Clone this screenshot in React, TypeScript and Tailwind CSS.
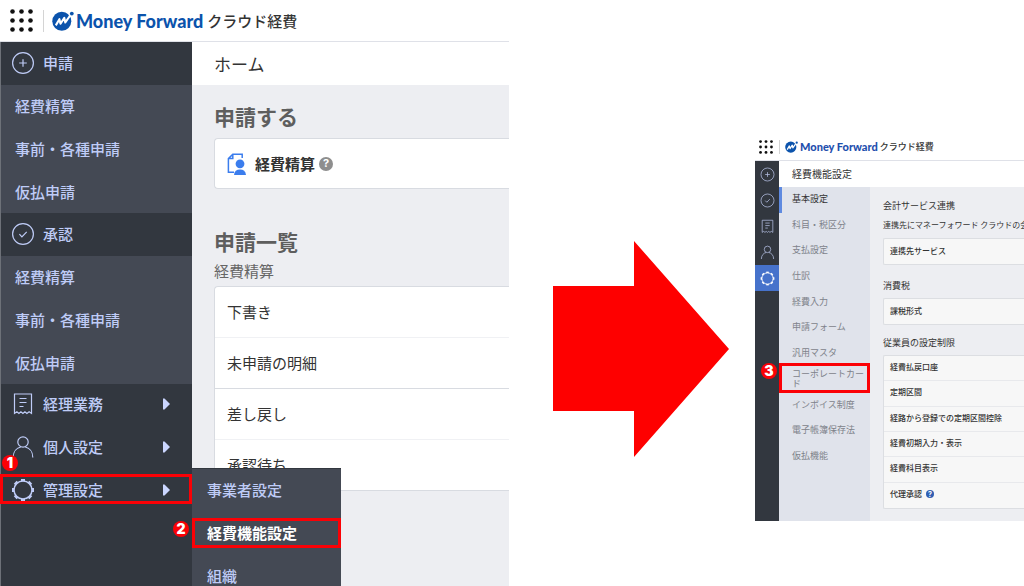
import type { ReactNode } from "react";

const REQUEST_LINKS = ["経費精算", "事前・各種申請", "仮払申請"];
const REQUEST_STATUSES = ["下書き", "未申請の明細", "差し戻し", "承認待ち"];
const SETTING_LINKS = [
  "基本設定",
  "科目・税区分",
  "支払設定",
  "仕訳",
  "経費入力",
  "申請フォーム",
  "汎用マスタ",
  "コーポレートカード",
  "インボイス制度",
  "電子帳簿保存法",
  "仮払機能",
];
const LIMIT_ROWS = [
  "経費払戻口座",
  "定期区間",
  "経路から登録での定期区間控除",
  "経費初期入力・表示",
  "経費科目表示",
  "代理承認",
];

function AppsIcon({ className }: { className: string }) {
  return (
    <svg viewBox="0 0 22 22" className={className} fill="#111">
      {[2.4, 11, 19.6].map((y) =>
        [2.4, 11, 19.6].map((x) => <circle key={`${x}-${y}`} cx={x} cy={y} r="2.2" />),
      )}
    </svg>
  );
}

function LogoMark({ className }: { className: string }) {
  return (
    <svg viewBox="0 0 22 20" className={className}>
      <circle cx="9.8" cy="10.2" r="9.5" fill="#0b53ac" />
      <circle cx="19.8" cy="2.6" r="3.4" fill="#fff" />
      <circle cx="19.8" cy="2.6" r="1.9" fill="#0b53ac" />
      <path
        d="M3.8 14.4 7.4 8.2 8.5 12.8 12.3 6.9 13.3 11.4 17.8 5"
        fill="none"
        stroke="#fff"
        strokeWidth="2.1"
        strokeLinejoin="round"
      />
    </svg>
  );
}

function PlusIcon() {
  return (
    <>
      <circle cx="12" cy="12" r="10.4" />
      <path d="M12 8.2v7.6M8.2 12h7.6" />
    </>
  );
}

function CheckIcon() {
  return (
    <>
      <circle cx="12" cy="12" r="10.4" />
      <path d="m8.4 12.2 2.5 2.6 4.8-5" />
    </>
  );
}

function ReceiptIcon() {
  return (
    <path d="M3.5 21.4V2h17v19.4l-2.4-1.6-2.2 1.6-2-1.6-2 1.6-2-1.6-2 1.6-2-1.6zM8.500 6.500h7M8.500 10.500h7M8.500 14.500h4" />
  );
}

function PersonIcon() {
  return (
    <>
      <circle cx="12" cy="7" r="5.2" />
      <path d="M2.200 22.400c0-6 3.600-9.600 7.600-10.400M21.800 22.400c0-6-3.600-9.600-7.600-10.400" />
    </>
  );
}

function GearIcon() {
  return (
    <>
      <circle cx="12" cy="12" r="9" strokeWidth="1.500" />
      {[0, 45, 90, 135, 180, 225, 270, 315].map((deg) => (
        <path key={deg} d="M10 2.100h4" strokeWidth="2.200" transform={`rotate(${deg} 12 12)`} />
      ))}
    </>
  );
}

function MenuIcon({ className, children }: { className: string; children: ReactNode }) {
  return (
    <svg viewBox="0 0 24 24" className={className} fill="none" stroke="currentColor" strokeWidth="1.200">
      {children}
    </svg>
  );
}

function StepBadge({ className, children }: { className: string; children: ReactNode }) {
  return (
    <span
      className={`absolute z-20 flex size-4 items-center justify-center rounded-full bg-[#fb0106] font-['Inter'] text-[14px] leading-none font-black text-white ${className}`}
    >
      {children}
    </span>
  );
}

function MenuButton({ icon, label }: { icon: ReactNode; label: string }) {
  return (
    <button type="button" className="flex size-full items-center gap-2 pr-5 pb-0.5 pl-[10px] text-left">
      <MenuIcon className="size-6">{icon}</MenuIcon>
      <span className="flex-1">{label}</span>
      <svg viewBox="0 0 7 12" className="mr-0.5 h-3 w-[7px]" fill="#cbd6ff">
        <path d="M0 .5h1.500L7 6l-5.500 5.500H0z" />
      </svg>
    </button>
  );
}

function SubLinks() {
  return (
    <div className="grid h-32 grid-rows-3 bg-[#444954]">
      {REQUEST_LINKS.map((label) => (
        <a key={label} href="#" className="flex items-center pl-[14px]">
          {label}
        </a>
      ))}
    </div>
  );
}

function Sidebar() {
  return (
    <nav className="w-48 shrink-0 border-l border-[#6d7178] bg-[#32373f] text-[15px] leading-5 font-medium text-[#bfccf7]">
      <div className="flex h-[43px] items-center gap-2 pb-0.5 pl-[10px]">
        <MenuIcon className="size-6">
          <PlusIcon />
        </MenuIcon>
        申請
      </div>
      <SubLinks />
      <div className="flex h-[43px] items-center gap-2 pb-0.5 pl-[10px]">
        <MenuIcon className="size-6">
          <CheckIcon />
        </MenuIcon>
        承認
      </div>
      <SubLinks />
      <div className="grid h-32 grid-rows-3">
        <MenuButton icon={<ReceiptIcon />} label="経理業務" />
        <MenuButton icon={<PersonIcon />} label="個人設定" />
        <div className="relative">
          <MenuButton icon={<GearIcon />} label="管理設定" />
          <span className="pointer-events-none absolute top-[5px] right-0 -left-px h-[30px] border-3 border-[#fb0106]" />
          <StepBadge className="-top-[14px] left-px">1</StepBadge>
          <AdminMenu />
        </div>
      </div>
    </nav>
  );
}

function AdminMenu() {
  return (
    <div className="absolute -top-px left-full z-10 w-[149px] border-t border-[#32373f] bg-[#444954]">
      <a href="#" className="flex h-[42px] items-center pl-[15px]">
        事業者設定
      </a>
      <a href="#" className="relative flex h-[43px] items-center pl-[15px] font-bold text-white">
        経費機能設定
        <span className="pointer-events-none absolute inset-x-0 top-[7px] h-[30px] border-3 border-[#fb0106]" />
        <StepBadge className="top-[10px] -left-[19px]">2</StepBadge>
      </a>
      <a href="#" className="flex h-[43px] items-center pl-[15px]">
        組織
      </a>
    </div>
  );
}

function HomeScreen() {
  return (
    <section className="flex min-w-0 flex-[509] flex-col">
      <header className="flex h-[42px] items-center border-b border-[#dfe1e8] pl-[10px]">
        <button type="button" aria-label="アプリ一覧">
          <AppsIcon className="size-[23px]" />
        </button>
        <span className="mr-2 ml-2.5 h-[22px] w-px bg-[#d4d4d4]" />
        <a href="#" className="flex items-center whitespace-nowrap">
          <LogoMark className="mr-0.5 h-5 w-[22px]" />
          <span className="font-['Lato'] text-[18px] leading-6 font-black text-[#0b53ac]">Money Forward</span>
          <span className="ml-1 text-[15px] leading-6 font-medium text-[#333]">クラウド経費</span>
        </a>
      </header>
      <div className="flex flex-1">
        <Sidebar />
        <main className="min-w-0 flex-1 bg-[#edeef2] text-[15px] leading-5 text-[#333]">
          <h1 className="flex h-[43px] items-center bg-white pl-[22px] text-[17px]">ホーム</h1>
          <div className="pl-[22px]">
            <h2 className="mt-[17px] text-[21px] leading-7 font-bold text-[#5e5e5e]">申請する</h2>
            <a
              href="#"
              className="mt-2 flex h-[51px] items-center rounded-l border border-r-0 border-[#d8dbe1] bg-white pl-3 font-bold"
            >
              <svg viewBox="0 0 20 22" className="mr-2 h-[22px] w-5" fill="none" stroke="#3b7ded" strokeWidth="1.500">
                <path d="M7 19.200H1.400V5.600L5.800 1.200h9.400V5M5.800 1.200v4.400H1.400" />
                <circle cx="13" cy="10.800" r="4.400" fill="#3b7ded" stroke="none" />
                <path d="M7 22c.300-3.600 2.600-5.400 6-5.400s5.700 1.800 6 5.400z" fill="#3b7ded" stroke="none" />
              </svg>
              経費精算
              <span className="ml-1 flex size-[14px] items-center justify-center rounded-full bg-[#8e8e8e] font-['Inter'] text-[11px] leading-none text-white">
                ?
              </span>
            </a>
            <h2 className="mt-[38px] text-[21px] leading-7 font-bold text-[#5e5e5e]">申請一覧</h2>
            <h3 className="mt-1.5 text-[#666]">経費精算</h3>
            <ul className="mt-[5px] rounded-l border border-r-0 border-[#d8dbe1] bg-white">
              {REQUEST_STATUSES.map((label, i) => (
                <li
                  key={label}
                  className={
                    i === 0
                      ? "h-[50px]"
                      : i === 2
                        ? "h-[51px] border-t border-[#d8dbe1]"
                        : "h-[51px] border-t border-[#f0f1f4]"
                  }
                >
                  <a href="#" className="flex h-full items-center pl-3">
                    {label}
                  </a>
                </li>
              ))}
            </ul>
          </div>
        </main>
      </div>
    </section>
  );
}

function RailLink({ label, active, children }: { label: string; active?: boolean; children: ReactNode }) {
  return (
    <a
      href="#"
      aria-label={label}
      className={
        active
          ? "flex h-[26px] items-center justify-center bg-[#4672cb] text-white"
          : "flex h-[26px] items-center justify-center"
      }
    >
      <MenuIcon className="size-[15px]">{children}</MenuIcon>
    </a>
  );
}

function SettingsScreen() {
  return (
    <section className="min-w-0 flex-[269] pt-[134px]">
      <header className="flex h-[27px] items-center border-b border-[#dfe1e8] pl-1">
        <button type="button" aria-label="アプリ一覧">
          <AppsIcon className="size-[14px]" />
        </button>
        <span className="mr-[5px] ml-1.5 h-[14px] w-px bg-[#d4d4d4]" />
        <a href="#" className="flex items-center whitespace-nowrap">
          <LogoMark className="mr-0.5 h-3 w-[13px]" />
          <span className="font-['Lato'] text-[11px] leading-4 font-black text-[#1f4fae]">Money Forward</span>
          <span className="ml-0.5 text-[9px] leading-4 font-medium text-[#333]">クラウド経費</span>
        </a>
      </header>
      <div className="flex">
        <nav className="w-6 shrink-0 bg-[#32373f] text-[#b4bfe3]">
          <RailLink label="申請">
            <PlusIcon />
          </RailLink>
          <RailLink label="承認">
            <CheckIcon />
          </RailLink>
          <RailLink label="経理業務">
            <ReceiptIcon />
          </RailLink>
          <RailLink label="個人設定">
            <PersonIcon />
          </RailLink>
          <RailLink label="管理設定" active>
            <GearIcon />
          </RailLink>
        </nav>
        <div className="min-w-0 flex-1">
          <h1 className="flex h-[26px] items-center pl-[13px] text-[10px] leading-4 text-[#333]">経費機能設定</h1>
          <div className="flex">
            <nav className="w-[91px] shrink-0 bg-[#e0e3eb] pb-[51px] text-[9px] leading-[10px] text-[#7e828a]">
              <ul className="grid h-[283px] grid-rows-11">
                {SETTING_LINKS.map((label, i) => (
                  <li key={label} className="relative">
                    <a
                      href="#"
                      className={
                        i === 0
                          ? "flex h-full items-center border-l-3 border-[#5f8ae0] pb-0.5 pl-2.5 text-[#333]"
                          : "flex h-full items-center pb-0.5 pl-[13px]"
                      }
                    >
                      {label}
                    </a>
                    {label === "コーポレートカード" && (
                      <>
                        <span className="pointer-events-none absolute inset-x-0 -top-1 h-[30px] border-3 border-[#fb0106]" />
                        <StepBadge className="-top-1 -left-[18px]">3</StepBadge>
                      </>
                    )}
                  </li>
                ))}
              </ul>
            </nav>
            <main className="min-w-0 flex-1 overflow-hidden bg-[#edeef2] pt-3 pl-[13px] text-[8px] leading-[14px] whitespace-nowrap text-[#333]">
              <h2 className="text-[9px]">会計サービス連携</h2>
              <p className="mt-[5px]">連携先にマネーフォワード クラウドの会</p>
              <div className="mt-1.5 flex h-[27px] items-center rounded-l-xs border border-r-0 border-[#dcdee2] bg-[#f7f7f7] pb-0.5 pl-1.5 font-medium">
                連携先サービス
              </div>
              <h2 className="mt-[14px] text-[9px]">消費税</h2>
              <div className="mt-[5px] flex h-[27px] items-center rounded-l-xs border border-r-0 border-[#dcdee2] bg-[#f7f7f7] pb-0.5 pl-1.5 font-medium">
                課税形式
              </div>
              <h2 className="mt-[11px] text-[9px]">従業員の設定制限</h2>
              <ul className="mt-[5px] grid h-[154px] grid-rows-6 divide-y divide-[#e8e9ec] rounded-l-xs border border-r-0 border-[#dcdee2] bg-[#f7f7f7] font-medium">
                {LIMIT_ROWS.map((label) => (
                  <li key={label} className="flex items-center pb-0.5 pl-1.5">
                    {label}
                    {label === "代理承認" && (
                      <span className="ml-1 flex size-2 items-center justify-center rounded-full bg-[#2f5fb3] font-['Inter'] text-[7px] leading-none font-bold text-white">
                        ?
                      </span>
                    )}
                  </li>
                ))}
              </ul>
            </main>
          </div>
        </div>
      </div>
    </section>
  );
}

export default function App() {
  return (
    <div className="flex min-h-screen overflow-hidden bg-white font-['Noto_Sans_CJK_JP',sans-serif]">
      <HomeScreen />
      <div className="min-w-0 flex-[246]">
        <div className="pt-[241px] pr-[26px] pl-[44px]">
          <svg viewBox="0 0 176 216" className="w-full" fill="#fe0000">
            <path d="M0 45h81V0l95 108-95 108v-46H0z" />
          </svg>
        </div>
      </div>
      <SettingsScreen />
    </div>
  );
}
